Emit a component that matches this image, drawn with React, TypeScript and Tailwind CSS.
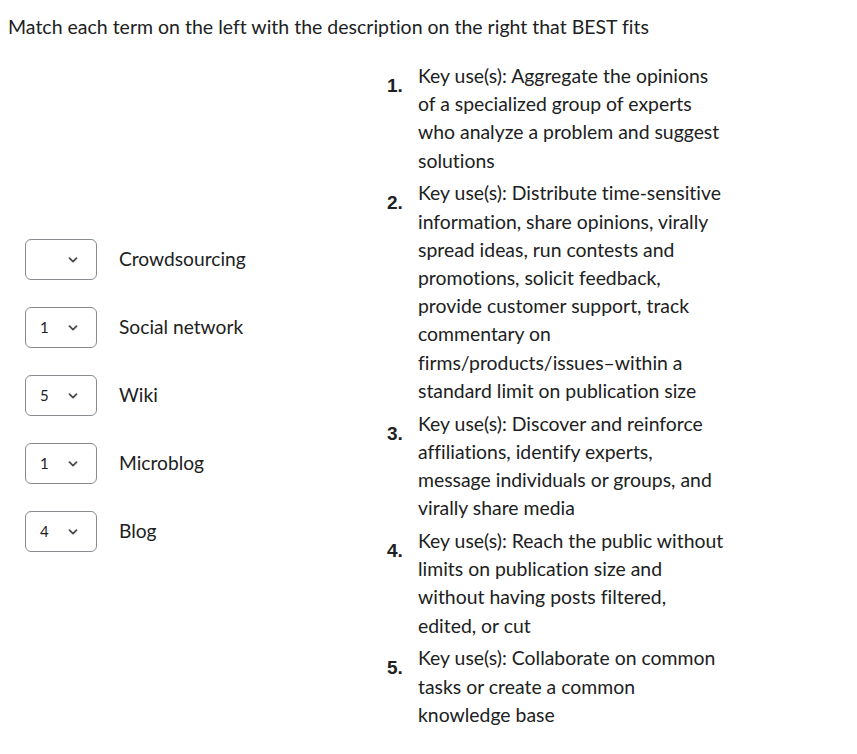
const terms = [
  { value: "", label: "Crowdsourcing" },
  { value: "1", label: "Social network" },
  { value: "5", label: "Wiki" },
  { value: "1", label: "Microblog" },
  { value: "4", label: "Blog" },
];

const descriptions = [
  "Key use(s): Aggregate the opinions of a specialized group of experts who analyze a problem and suggest solutions",
  "Key use(s): Distribute time-sensitive information, share opinions, virally spread ideas, run contests and promotions, solicit feedback, provide customer support, track commentary on firms/products/issues\u2013within a standard limit on publication size",
  "Key use(s): Discover and reinforce affiliations, identify experts, message individuals or groups, and virally share media",
  "Key use(s): Reach the public without limits on publication size and without having posts filtered, edited, or cut",
  "Key use(s): Collaborate on common tasks or create a common knowledge base",
];

function Chevron() {
  return (
    <svg width="10" height="6" viewBox="0 0 10 6" className="text-[#494c4e]">
      <path d="M1.5 1.2 L5 4.6 L8.5 1.2" fill="none" stroke="currentColor" strokeWidth="1.8" strokeLinecap="round" strokeLinejoin="round" />
    </svg>
  );
}

function TermRow({ value, label }: { value: string; label: string }) {
  return (
    <div className="flex items-center">
      <div className="flex h-[41px] w-[72px] items-center rounded-[6px] border border-[#868c8f] bg-white pl-[14px] pr-[15px]">
        <span className="w-[28px] text-[15px] text-[#202122]">{value}</span>
        <Chevron />
      </div>
      <span className="ml-[22px] text-[19.2px] text-[#202122]">{label}</span>
    </div>
  );
}

export default function App() {
  return (
    <div
      className="bg-white px-[8px] pt-[13px] text-[#202122] [font-variant-ligatures:none]"
      style={{ fontFamily: "Lato, 'Open Sans', sans-serif" }}
    >
      <h1 className="text-[19.5px] font-normal leading-[28px]">
        Match each term on the left with the description on the right that BEST fits
      </h1>
      <div className="mt-[21px] flex">
        <div className="flex w-[379px] flex-col justify-center gap-[27px] pl-[17px]">
          {terms.map((t) => (
            <TermRow key={t.label} value={t.value} label={t.label} />
          ))}
        </div>
        <ol className="flex flex-col gap-[4.6px]">
          {descriptions.map((d, i) => (
            <li key={i} className="flex">
              <span
                className="w-[31px] pt-[14px] text-[19px] font-bold leading-[20px] text-[#202122]"
                style={{ fontFamily: "'Liberation Sans', Arial, sans-serif" }}
              >
                {i + 1}.
              </span>
              <p className="w-[310px] text-[19.4px] leading-[28.2px]">{d}</p>
            </li>
          ))}
        </ol>
      </div>
    </div>
  );
}
